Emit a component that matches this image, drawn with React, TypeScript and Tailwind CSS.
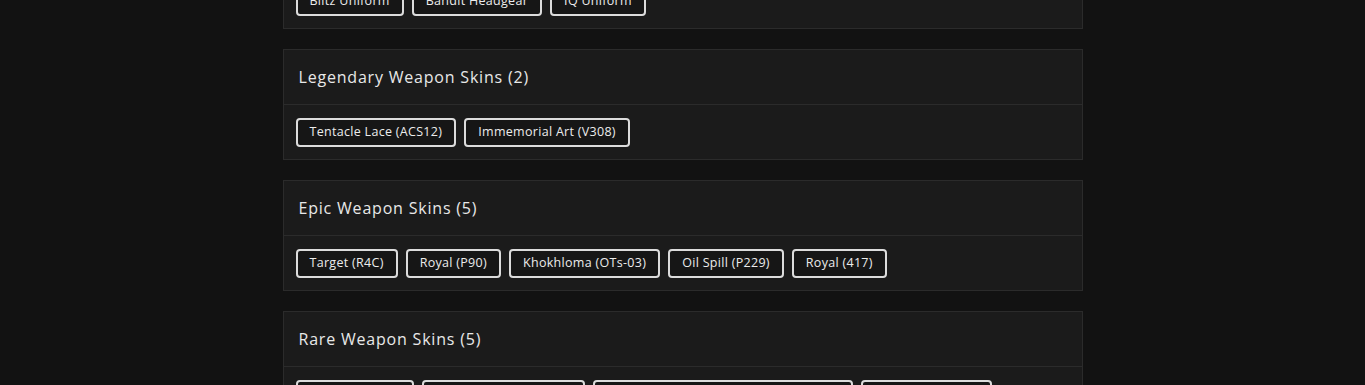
import React from "react";

interface Section {
  title: string;
  items: string[];
}

const sections: Section[] = [
  { title: "Legendary Uniforms (3)", items: ["Blitz Uniform", "Bandit Headgear", "IQ Uniform"] },
  { title: "Legendary Weapon Skins (2)", items: ["Tentacle Lace (ACS12)", "Immemorial Art (V308)"] },
  {
    title: "Epic Weapon Skins (5)",
    items: ["Target (R4C)", "Royal (P90)", "Khokhloma (OTs-03)", "Oil Spill (P229)", "Royal (417)"],
  },
  {
    title: "Rare Weapon Skins (5)",
    items: ["Cobalt (SMG-6)", "Emerald Mirage (MP5)", "Stormbringer Commemorative (M870)", "Lagoon (SMG-12)"],
  },
];

function SectionCard({ section }: { section: Section }) {
  return (
    <div className="mb-5 border border-[#2b2b2b] bg-[#1b1b1b]">
      <div className="flex h-[55px] items-center border-b border-[#2b2b2b] px-[15px]">
        <h2 className="-mt-px text-[16px] font-medium tracking-[0.8px] text-[#e8e8e8]">{section.title}</h2>
      </div>
      <div className="flex flex-wrap gap-2 px-3 pt-[13px] pb-3">
        {section.items.map((item) => (
          <span
            key={item}
            className="flex h-[29px] items-center rounded-[4px] border-2 border-[#dcdcdc] bg-[#161616] px-3 text-[12.5px] tracking-[0.3px] text-[#ececec]"
          >
            {item}
          </span>
        ))}
      </div>
    </div>
  );
}

export default function App() {
  return (
    <div
      className="h-[385px] overflow-hidden bg-[#121212]"
      style={{ fontFamily: '"Open Sans", "Liberation Sans", sans-serif' }}
    >
      <div className="mx-auto -mt-[82px] w-[800px]">
        {sections.map((s) => (
          <SectionCard key={s.title} section={s} />
        ))}
      </div>
    </div>
  );
}
